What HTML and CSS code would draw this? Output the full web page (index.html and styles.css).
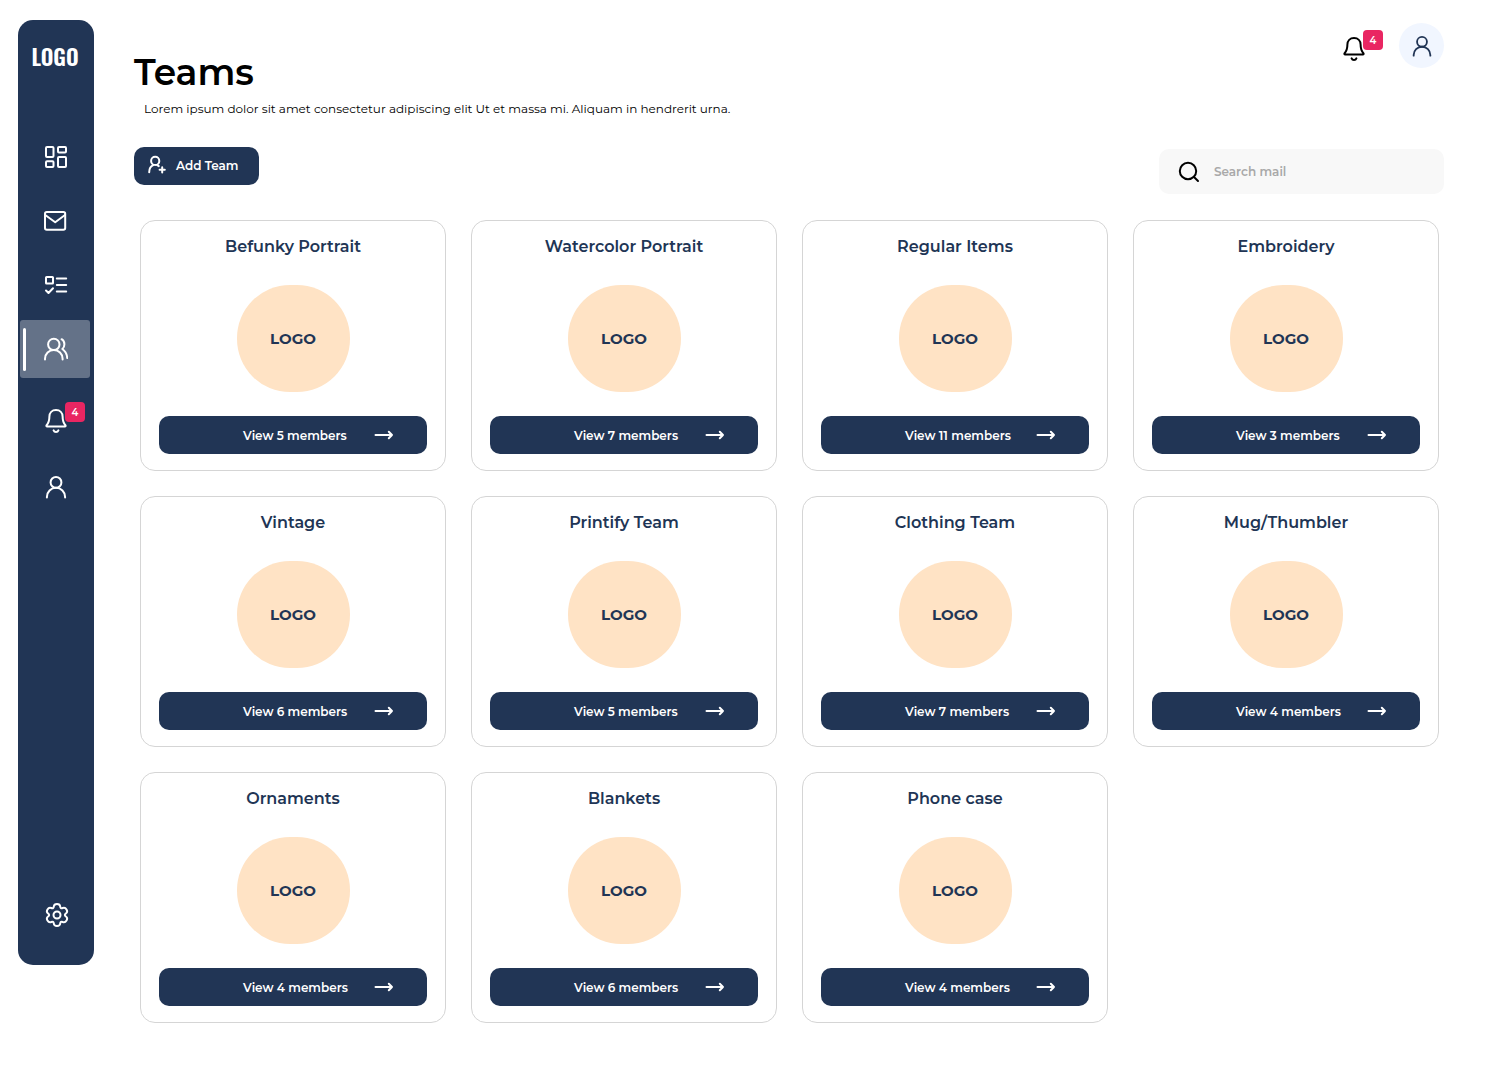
FILE: index.html
```html
<!DOCTYPE html>
<html lang="en">
<head>
<meta charset="utf-8">
<meta name="viewport" content="width=device-width, initial-scale=1">
<title>Teams</title>
<link rel="stylesheet" href="styles.css">
</head>
<body>
<svg class="sprite" aria-hidden="true">
  <symbol id="bell" viewBox="0 0 24 24"><path d="M12 1C8 1 5.4 3.8 5.4 7.6c0 4.4-.8 6.6-2.8 8.6-.5.6-.2 1.4.6 1.4h17.6c.8 0 1.1-.8.6-1.4-2-2-2.8-4.2-2.8-8.6C18.6 3.8 16 1 12 1z"/><path d="M9.6 21.4c.4 1 1.3 1.6 2.4 1.6s2-.6 2.4-1.6"/></symbol>
  <symbol id="person" viewBox="0 0 24 24"><circle cx="12" cy="7.4" r="5.4"/><path d="M2.9 22.5v-.6a9.1 9.1 0 0 1 18.2 0v.6"/></symbol>
  <symbol id="arrow" viewBox="0 0 20 10"><path d="M1.5 5H18M14.8 1.8L18 5l-3.2 3.2"/></symbol>
</svg>
<div class="layout">
  <nav class="sidebar" aria-label="Main">
    <a class="brand" href="#">LOGO</a>
    <div class="nav-group">
      <a class="nav-item" href="#" aria-label="Dashboard"><svg class="icon" viewBox="0 0 24 24"><rect x="2" y="2" width="7.5" height="10" rx="1"/><rect x="14" y="2" width="8" height="5.5" rx="1"/><rect x="2" y="16.3" width="7.5" height="5.7" rx="1"/><rect x="14" y="12" width="8" height="10" rx="1"/></svg></a>
      <a class="nav-item" href="#" aria-label="Mail"><svg class="icon" viewBox="0 0 24 24"><rect x="1" y="3" width="20.2" height="17.8" rx="1.8"/><path d="M1.2 6l10 7.2L21 6"/></svg></a>
      <a class="nav-item" href="#" aria-label="Tasks"><svg class="icon" viewBox="0 0 24 24"><rect x="2" y="4" width="7" height="6.6" rx=".6"/><path d="M12.8 5.5h9.4M12.8 12h9.4M12.8 18.5h9.4M2 17.5L4.5 20l4.5-4.8"/></svg></a>
      <a class="nav-item nav-item-active" href="#" aria-label="Teams" aria-current="page"><svg class="icon" viewBox="0 0 24 24"><circle cx="9.8" cy="7.4" r="5.7"/><path d="M1 22.4v-.6a8.8 8.8 0 0 1 17.6 0v.6M17.6 2.2c2 1.2 2.8 3 2.8 5 0 2-.7 3.6-2 4.8 3 2.2 4.6 5.2 4.8 9"/></svg></a>
    </div>
    <div class="nav-group nav-group-account">
      <a class="nav-item" href="#" aria-label="Notifications"><span class="bell-wrap"><svg class="icon"><use href="#bell"/></svg><span class="badge">4</span></span></a>
      <a class="nav-item" href="#" aria-label="Profile"><svg class="icon"><use href="#person"/></svg></a>
    </div>
    <a class="nav-item nav-settings" href="#" aria-label="Settings"><svg class="icon" viewBox="0 0 24 24"><path d="M12 1Q14.95 1 15.2 3.5Q15.4 6.1 17.7 5Q20.06 3.94 21.5 6.5Q23 9.05 20.9 10.5Q18.8 12 20.9 13.5Q23 14.95 21.5 17.5Q20.06 20.06 17.7 19Q15.4 17.9 15.2 20.5Q14.95 23 12 23Q9.05 23 8.8 20.5Q8.6 17.9 6.3 19Q3.94 20.06 2.5 17.5Q1 14.95 3.1 13.5Q5.2 12 3.1 10.5Q1 9.05 2.5 6.5Q3.94 3.94 6.3 5Q8.6 6.1 8.8 3.5Q9.05 1 12 1z"/><circle cx="12" cy="12" r="3.5"/></svg></a>
  </nav>

  <main class="content">
    <header class="page-header">
      <div class="heading">
        <h1 class="title">Teams</h1>
        <p class="subtitle">Lorem ipsum dolor sit amet consectetur adipiscing elit Ut et massa mi. Aliquam in hendrerit urna.</p>
      </div>
      <div class="account">
        <button class="icon-button" type="button" aria-label="Notifications"><span class="bell-wrap"><svg class="icon"><use href="#bell"/></svg><span class="badge">4</span></span></button>
        <button class="avatar" type="button" aria-label="Profile"><svg class="icon icon-small"><use href="#person"/></svg></button>
      </div>
    </header>

    <div class="toolbar">
      <button class="add-button" type="button"><svg class="icon icon-add" viewBox="0 0 20 20"><circle cx="7.2" cy="5.9" r="4.1"/><path d="M1.2 17.2c0-3.4 1.4-5.8 4-7M9.2 10.2l1.6.9M14.2 12.2v5.2M11.6 14.8h5.2"/></svg>Add Team</button>
      <div class="search">
        <svg class="icon search-icon" viewBox="0 0 24 24"><circle cx="11" cy="11" r="8.2"/><path d="M17 17l4 4"/></svg>
        <input class="search-input" type="search" placeholder="Search mail" aria-label="Search mail">
      </div>
    </div>

    <section class="teams" aria-label="Teams">
      <article class="card"><h2 class="card-title">Befunky Portrait</h2><div class="card-logo">LOGO</div><button class="view-button" type="button"><span>View 5 members</span><svg class="arrow"><use href="#arrow"/></svg></button></article>
      <article class="card"><h2 class="card-title">Watercolor Portrait</h2><div class="card-logo">LOGO</div><button class="view-button" type="button"><span>View 7 members</span><svg class="arrow"><use href="#arrow"/></svg></button></article>
      <article class="card"><h2 class="card-title">Regular Items</h2><div class="card-logo">LOGO</div><button class="view-button" type="button"><span>View 11 members</span><svg class="arrow"><use href="#arrow"/></svg></button></article>
      <article class="card"><h2 class="card-title">Embroidery</h2><div class="card-logo">LOGO</div><button class="view-button" type="button"><span>View 3 members</span><svg class="arrow"><use href="#arrow"/></svg></button></article>
      <article class="card"><h2 class="card-title">Vintage</h2><div class="card-logo">LOGO</div><button class="view-button" type="button"><span>View 6 members</span><svg class="arrow"><use href="#arrow"/></svg></button></article>
      <article class="card"><h2 class="card-title">Printify Team</h2><div class="card-logo">LOGO</div><button class="view-button" type="button"><span>View 5 members</span><svg class="arrow"><use href="#arrow"/></svg></button></article>
      <article class="card"><h2 class="card-title">Clothing Team</h2><div class="card-logo">LOGO</div><button class="view-button" type="button"><span>View 7 members</span><svg class="arrow"><use href="#arrow"/></svg></button></article>
      <article class="card"><h2 class="card-title">Mug/Thumbler</h2><div class="card-logo">LOGO</div><button class="view-button" type="button"><span>View 4 members</span><svg class="arrow"><use href="#arrow"/></svg></button></article>
      <article class="card"><h2 class="card-title">Ornaments</h2><div class="card-logo">LOGO</div><button class="view-button" type="button"><span>View 4 members</span><svg class="arrow"><use href="#arrow"/></svg></button></article>
      <article class="card"><h2 class="card-title">Blankets</h2><div class="card-logo">LOGO</div><button class="view-button" type="button"><span>View 6 members</span><svg class="arrow"><use href="#arrow"/></svg></button></article>
      <article class="card"><h2 class="card-title">Phone case</h2><div class="card-logo">LOGO</div><button class="view-button" type="button"><span>View 4 members</span><svg class="arrow"><use href="#arrow"/></svg></button></article>
    </section>
  </main>
</div>
</body>
</html>
```
FILE: styles.css
```css
:root {
  --navy: #213555;
  --peach: #ffe3c5;
  --pink: #e92662;
}

* { box-sizing: border-box; }

body {
  margin: 0;
  background: #fff;
  color: #000;
  font-family: Montserrat, Inter, sans-serif;
}

h1, h2, p { margin: 0; }

button {
  border: 0;
  padding: 0;
  background: none;
  font-family: inherit;
  cursor: pointer;
}

.sprite { display: none; }

.icon {
  display: block;
  flex: none;
  width: 24px;
  height: 24px;
  fill: none;
  stroke: currentColor;
  stroke-width: 2;
  stroke-linecap: round;
  stroke-linejoin: round;
}

.layout {
  display: flex;
  min-height: 100vh;
}

/* Sidebar */
.sidebar {
  display: flex;
  flex: none;
  flex-direction: column;
  width: 76px;
  margin: 20px 0 115px 18px;
  padding: 20px 4px 21px 2px;
  border-radius: 15px;
  background: var(--navy);
  color: #fff;
}

.brand {
  margin-bottom: 56px;
  color: #fff;
  font-family: Oswald, "Liberation Sans Narrow", "Open Sans Condensed", Inter, sans-serif;
  font-size: 22px;
  font-weight: 600;
  line-height: 32px;
  text-align: center;
  text-decoration: none;
}

.nav-group {
  display: flex;
  flex-direction: column;
  gap: 6px;
}

.nav-group-account {
  gap: 8px;
  margin-top: 14px;
}

.nav-item {
  position: relative;
  display: flex;
  align-items: center;
  justify-content: center;
  height: 58px;
  padding-left: 2px;
  border-radius: 3px;
  color: #fff;
}

.nav-item-active { background: #647288; }

.nav-item-active::before {
  content: "";
  position: absolute;
  top: 8px;
  bottom: 7px;
  left: 3px;
  width: 3px;
  border-radius: 2px;
  background: #fff;
}

.nav-settings {
  margin-top: auto;
  padding-left: 4px;
}

.bell-wrap {
  position: relative;
  display: block;
}

.badge {
  position: absolute;
  top: -7px;
  left: 21px;
  width: 20px;
  height: 20px;
  border-radius: 4px;
  background: var(--pink);
  color: #fff;
  font-size: 10px;
  font-weight: 600;
  line-height: 22px;
  text-align: center;
}

/* Page header */
.content {
  flex: 1;
  min-width: 0;
  padding: 23px 68px 57px 40px;
}

.page-header {
  display: flex;
  justify-content: space-between;
  gap: 24px;
}

.heading { padding-top: 25px; }

.title {
  font-size: 36px;
  font-weight: 600;
  line-height: 48px;
}

.subtitle {
  margin: 5px 0 0 10px;
  font-size: 12px;
  line-height: 16px;
}

.account {
  display: flex;
  align-items: center;
  gap: 33px;
  height: 45px;
}

.icon-button {
  padding-top: 7px;
  color: #000;
}

.avatar {
  display: flex;
  align-items: center;
  justify-content: center;
  width: 45px;
  height: 45px;
  border-radius: 50%;
  background: #f1f6ff;
  color: var(--navy);
}

.icon-small {
  width: 22px;
  height: 22px;
}

/* Toolbar */
.toolbar {
  display: flex;
  align-items: flex-start;
  justify-content: space-between;
  gap: 24px;
  margin-top: 30px;
}

.add-button {
  display: flex;
  align-items: center;
  gap: 8px;
  height: 38px;
  padding: 0 20px 2px 14px;
  border-radius: 10px;
  background: var(--navy);
  color: #fff;
  font-size: 12px;
  font-weight: 600;
}

.icon-add {
  width: 20px;
  height: 20px;
}

.search {
  display: flex;
  align-items: center;
  gap: 13px;
  width: 285px;
  height: 45px;
  margin-top: 2px;
  padding: 0 18px;
  border-radius: 10px;
  background: #f8f8f8;
}

.search-input {
  flex: 1;
  min-width: 0;
  padding: 0;
  border: 0;
  outline: 0;
  background: none;
  color: #000;
  font-family: inherit;
  font-size: 12px;
  font-weight: 600;
}

.search-input::placeholder {
  color: #a9a9a9;
  opacity: 1;
}

/* Team cards */
.teams {
  display: grid;
  grid-template-columns: repeat(4, 1fr);
  gap: 25px;
  margin-top: 26px;
  padding: 0 5px 0 6px;
}

.card {
  display: flex;
  flex-direction: column;
  padding: 16px 18px;
  border: 1px solid #d5d5d5;
  border-radius: 15px;
  color: var(--navy);
}

.card-title {
  font-size: 16px;
  font-weight: 600;
  line-height: 20px;
  text-align: center;
}

.card-logo {
  display: flex;
  align-items: center;
  justify-content: center;
  align-self: center;
  width: 113px;
  height: 107px;
  margin: 28px 0 24px;
  border-radius: 53px;
  background: var(--peach);
  font-size: 15px;
  font-weight: 700;
}

.view-button {
  display: grid;
  grid-template-columns: 1fr 100px 1fr;
  align-items: center;
  height: 38px;
  border-radius: 10px;
  background: var(--navy);
  color: #fff;
  font-size: 12px;
  font-weight: 600;
  text-align: left;
  white-space: nowrap;
}

.view-button span { grid-column: 2; }

.arrow {
  width: 20px;
  height: 10px;
  margin-left: 31px;
  fill: none;
  stroke: currentColor;
  stroke-width: 2;
  stroke-linecap: round;
  stroke-linejoin: round;
}
```
